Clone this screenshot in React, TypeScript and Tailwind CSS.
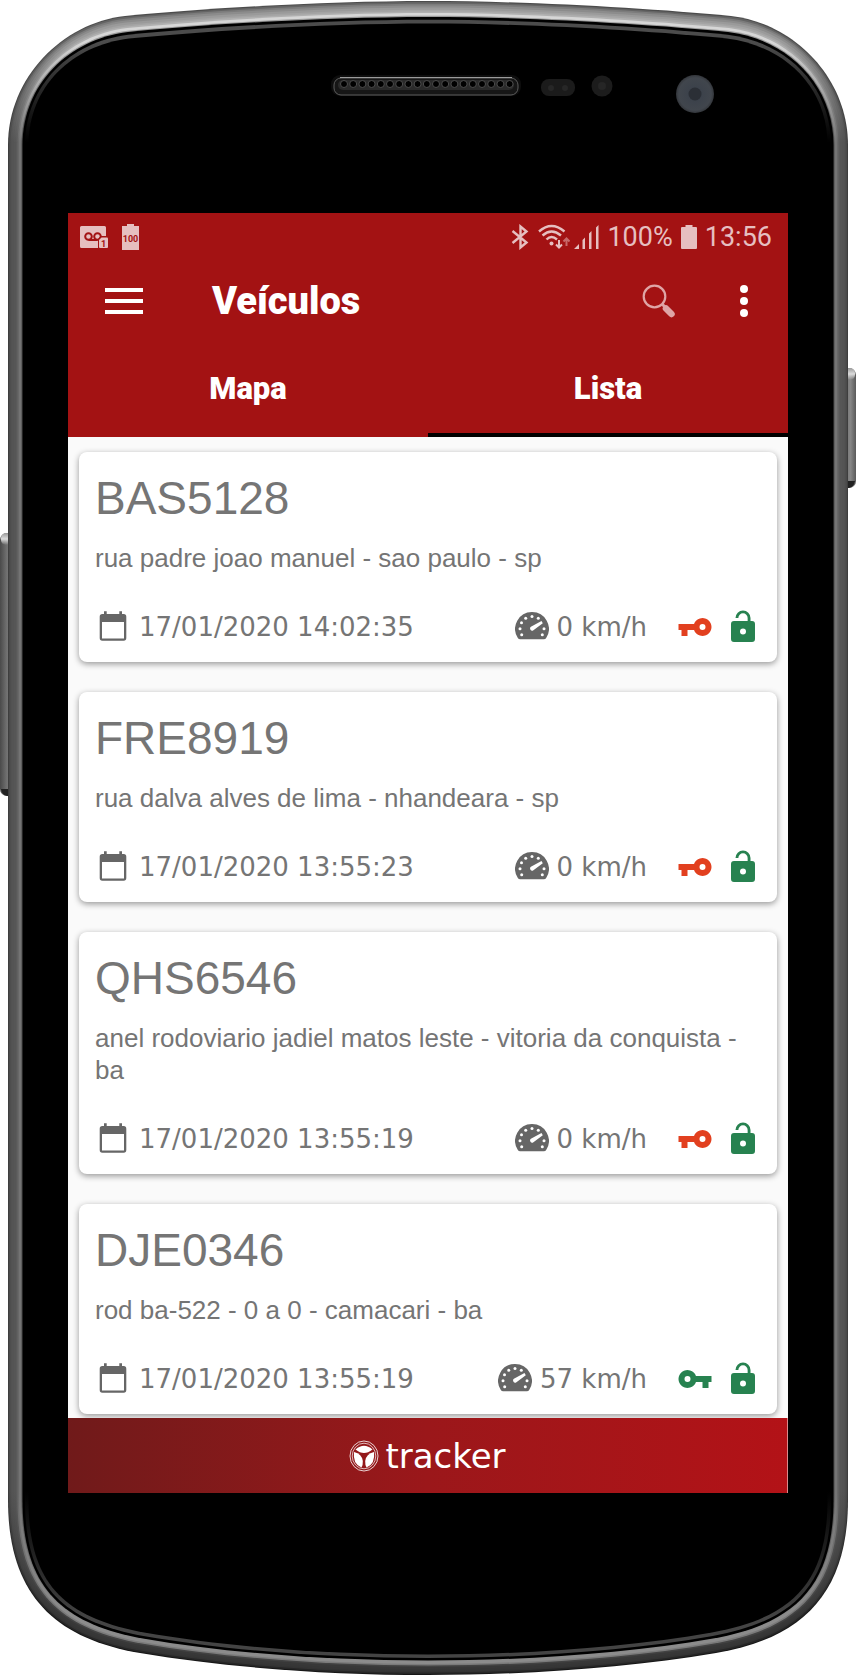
import { useState } from "react";

type Vehicle = {
  plate: string;
  address: string;
  date: string;
  speed: number;
  ignition: boolean;
};

const VEHICLES: Vehicle[] = [
  {
    plate: "BAS5128",
    address: "rua padre joao manuel - sao paulo - sp",
    date: "17/01/2020 14:02:35",
    speed: 0,
    ignition: false,
  },
  {
    plate: "FRE8919",
    address: "rua dalva alves de lima - nhandeara - sp",
    date: "17/01/2020 13:55:23",
    speed: 0,
    ignition: false,
  },
  {
    plate: "QHS6546",
    address: "anel rodoviario jadiel matos leste - vitoria da conquista - ba",
    date: "17/01/2020 13:55:19",
    speed: 0,
    ignition: false,
  },
  {
    plate: "DJE0346",
    address: "rod ba-522 - 0 a 0 - camacari - ba",
    date: "17/01/2020 13:55:19",
    speed: 57,
    ignition: true,
  },
];

const TABS = ["Mapa", "Lista"];

/* ---------- phone body ---------- */

// outline of the case, d = distance in from the outer edge
function outline(d: number) {
  const l = 8 + d;
  const r = 848 - d;
  const t = 1 + d * 1.1;
  const b = 1675 - d;
  return [
    `M428 ${t}`,
    `C330 ${t} 210 ${t + 7} ${125 + d * 0.2} ${t + 15}`,
    `C${62 + d * 0.5} ${t + 22} ${l} ${78 + d * 0.4} ${l} 145`,
    `L${l} 1500`,
    `C${l} ${1590 - d * 0.4} ${50 + d * 0.6} ${b - 37} ${140 + d * 0.2} ${b - 22}`,
    `C230 ${b - 7} 330 ${b} 428 ${b}`,
    `C526 ${b} 626 ${b - 7} ${716 - d * 0.2} ${b - 22}`,
    `C${806 - d * 0.6} ${b - 37} ${r} ${1590 - d * 0.4} ${r} 1500`,
    `L${r} 145`,
    `C${r} ${78 + d * 0.4} ${794 - d * 0.5} ${t + 22} ${731 - d * 0.2} ${t + 15}`,
    `C646 ${t + 7} 526 ${t} 428 ${t}Z`,
  ].join(" ");
}

const BEVEL = [
  { d: 0, top: "#4c4c4c", side: "#3e3e3e", bottom: "#161616" },
  { d: 1, top: "#646464", side: "#4a4a4a", bottom: "#262626" },
  { d: 2.5, top: "#7c7c7c", side: "#525252", bottom: "#333333" },
  { d: 4, top: "#8c8c8c", side: "#545454", bottom: "#363636" },
  { d: 6, top: "#9a9a9a", side: "#565656", bottom: "#383838" },
  { d: 8, top: "#a4a4a4", side: "#5a5a5a", bottom: "#424242" },
  { d: 9.5, top: "#b0b0b0", side: "#686868", bottom: "#7a7a7a" },
  { d: 11, top: "#d6d6d6", side: "#747474", bottom: "#8c8c8c" },
  { d: 13.5, top: "#9a9a9a", side: "#4a4a4a", bottom: "#8a8a8a" },
  { d: 14.5, top: "#000000", side: "#000000", bottom: "#000000" },
  { d: 17, top: "#4c4c4c", side: "#000000", bottom: "#444444" },
  { d: 20.5, top: "#000000", side: "#000000", bottom: "#000000" },
];

const HOLES = Array.from({ length: 19 }, (_, i) => 344 + i * 9.2);

function PhoneBody() {
  return (
    <svg
      className="absolute inset-0 h-full w-full"
      viewBox="0 0 856 1676"
      preserveAspectRatio="none"
      aria-hidden="true"
    >
      <defs>
        {BEVEL.map((b, i) => (
          <linearGradient
            key={i}
            id={`bevel${i}`}
            gradientUnits="userSpaceOnUse"
            x1="0"
            y1="0"
            x2="0"
            y2="1676"
          >
            <stop offset="0" stopColor={b.top} />
            <stop offset="0.025" stopColor={b.top} />
            <stop offset="0.085" stopColor={b.side} />
            <stop offset="0.89" stopColor={b.side} />
            <stop offset="0.965" stopColor={b.bottom} />
          </linearGradient>
        ))}
        <linearGradient id="key" x1="0" y1="0" x2="1" y2="0">
          <stop offset="0" stopColor="#4a4a4a" />
          <stop offset="0.35" stopColor="#6e6e6e" />
          <stop offset="0.7" stopColor="#868686" />
          <stop offset="1" stopColor="#5a5a5a" />
        </linearGradient>
        <linearGradient id="keyCap" x1="0" y1="0" x2="0" y2="1">
          <stop offset="0" stopColor="#9a9a9a" />
          <stop offset="0.5" stopColor="#dcdcdc" />
          <stop offset="1" stopColor="#dcdcdc" stopOpacity="0" />
        </linearGradient>
        <radialGradient id="lens">
          <stop offset="0.35" stopColor="#3c424b" />
          <stop offset="0.85" stopColor="#41464d" />
          <stop offset="1" stopColor="#33363b" />
        </radialGradient>
      </defs>

      <rect x="0" y="533" width="18" height="263" rx="7" fill="url(#key)" />
      <rect x="1" y="533" width="10" height="12" rx="5" fill="url(#keyCap)" />
      <path d="M1 789h10v7H7q-5-1-6-7z" fill="#222" />
      <rect x="838" y="368" width="18" height="120" rx="7" fill="url(#key)" />
      <rect x="845" y="368" width="10" height="12" rx="5" fill="url(#keyCap)" />
      <path d="M845 481h10q-1 6-6 7h-4z" fill="#222" />

      {BEVEL.map((b, i) => (
        <path key={b.d} d={outline(b.d)} fill={`url(#bevel${i})`} />
      ))}

      {/* earpiece */}
      <rect x="331" y="75" width="190" height="21" rx="9" fill="#0d0d0d" />
      <rect x="334" y="78" width="184" height="17" rx="7" fill="#161616" stroke="#5c5c5c" />
      <path d="M340 77.5h172" stroke="#9a9a9a" />
      <rect x="338" y="80" width="176" height="10" rx="5" fill="#2a2a2a" />
      {HOLES.map((x) => (
        <circle key={x} cx={x} cy="84" r="3.5" fill="#000" stroke="#4c4c4c" />
      ))}

      {/* sensors and front camera */}
      <rect x="541" y="79" width="34" height="17" rx="8" fill="#1b1b1b" />
      <circle cx="551" cy="88" r="3" fill="#272727" />
      <circle cx="565" cy="88" r="3" fill="#272727" />
      <circle cx="602" cy="86" r="10.5" fill="#1c1c1c" />
      <circle cx="602" cy="86" r="4" fill="#262626" />
      <circle cx="695" cy="94" r="19" fill="url(#lens)" />
      <circle cx="695" cy="94" r="6.5" fill="#2b2f36" />
    </svg>
  );
}

/* ---------- icons ---------- */

function VoicemailIcon() {
  return (
    <svg width="28" height="24" viewBox="0 0 28 24" aria-hidden="true">
      <path
        d="M1.500 1h23Q26 1 26 2.500V11h-5.500L18 14v9H1.500Q0 23 0 21.500v-19Q0 1 1.500 1z"
        fill="#e6bfc0"
      />
      <g fill="none" stroke="#a31213" strokeWidth="2">
        <circle cx="8.500" cy="11.500" r="3.300" />
        <circle cx="17.500" cy="11.500" r="3.300" />
        <path d="M8.500 15h9" />
      </g>
      <path d="M21.500 12.500H27q1 0 1 1V22q0 1-1 1h-7q-1 0-1-1v-7z" fill="#e6bfc0" />
      <text
        x="23.500"
        y="21.500"
        textAnchor="middle"
        fill="#a31213"
        className="font-['Roboto'] text-[9px] font-bold"
      >
        1
      </text>
    </svg>
  );
}

function BatteryLevelIcon() {
  return (
    <svg width="17" height="26" viewBox="0 0 17 26" aria-hidden="true">
      <path d="M0 2h5V0h7v2h5v24H0z" fill="#e6bfc0" />
      <text
        x="8.500"
        y="18"
        textAnchor="middle"
        fill="#a31213"
        className="font-['Roboto'] text-[9px] font-bold"
      >
        100
      </text>
    </svg>
  );
}

function BluetoothIcon() {
  return (
    <svg
      width="24"
      height="26"
      viewBox="0 0 24 26"
      fill="none"
      stroke="#e6bfc0"
      strokeWidth="2.400"
      aria-hidden="true"
    >
      <path d="M2.500 7l14 11.500-6 5V2.500l6 5L2.500 19" />
    </svg>
  );
}

function WifiIcon() {
  return (
    <svg width="32" height="26" viewBox="0 0 32 26" fill="none" aria-hidden="true">
      <g stroke="#e6bfc0" strokeWidth="2.400">
        <path d="M1 7.500Q13.500-3.500 26.500 7.500" />
        <path d="M4.500 11.500Q13.500 3.500 23 11.500" />
        <path d="M8.500 15.500Q13.500 10.500 19 15.500" />
      </g>
      <circle cx="13.500" cy="19.500" r="2" fill="#e6bfc0" />
      <path d="M21 16v7M18 20.500l3 3 3-3" stroke="#e6bfc0" strokeWidth="2" />
      <path d="M28.500 22v-7M25.500 17.500l3-3 3 3" stroke="#c7696a" strokeWidth="2" />
    </svg>
  );
}

function SignalIcon() {
  return (
    <svg width="25" height="24" viewBox="0 0 25 24" fill="#e6bfc0" aria-hidden="true">
      <path d="M0 24l5-5v5zM8.500 24V15l2.500-2.500V24zM15 24V8.500l2.500-2.500V24zM22 24V2.500L24.500 0v24z" />
    </svg>
  );
}

function BatteryIcon() {
  return (
    <svg width="16" height="24" viewBox="0 0 16 24" fill="#e6bfc0" aria-hidden="true">
      <path d="M1 2h3.500V0h7v2H15q1 0 1 1v20q0 1-1 1H1q-1 0-1-1V3q0-1 1-1z" />
    </svg>
  );
}

function SearchIcon() {
  return (
    <svg width="34" height="34" viewBox="0 0 34 34" fill="none" stroke="#dfa5a6" aria-hidden="true">
      <circle cx="12.500" cy="12.500" r="10.800" strokeWidth="2.200" />
      <path d="M20 20l3.500 3.500" strokeWidth="3" />
      <path d="M24 24.500l5.500 5.500" strokeWidth="6.500" strokeLinecap="round" />
    </svg>
  );
}

function CalendarIcon() {
  return (
    <svg width="32" height="34" viewBox="0 0 32 34" fill="#666" aria-hidden="true">
      <path d="M26.700 4H25V1.300h-2.700V4H9.700V1.300H7V4H5.300a2.700 2.700 0 0 0-2.600 2.700V28a2.700 2.700 0 0 0 2.600 2.700h21.400a2.700 2.700 0 0 0 2.600-2.700V6.700A2.700 2.700 0 0 0 26.700 4zm.300 24.500H5V12h22z" />
    </svg>
  );
}

function SpeedIcon() {
  return (
    <svg width="34" height="30" viewBox="0 0 34 30" aria-hidden="true">
      <path
        d="M17 0a16.800 16.800 0 0 1 14.300 25.700Q30.400 27.300 28.800 27.300H5.200Q3.600 27.300 2.700 25.700A16.800 16.800 0 0 1 17 0z"
        fill="#666"
      />
      <g fill="#fff">
        <circle cx="17" cy="4.600" r="1.500" />
        <circle cx="10.700" cy="6.200" r="1.500" />
        <circle cx="23.300" cy="6.200" r="1.500" />
        <circle cx="6.500" cy="10.700" r="1.500" />
        <circle cx="5" cy="16.700" r="1.500" />
        <circle cx="29" cy="16.700" r="1.500" />
        <circle cx="6.700" cy="22.700" r="1.500" />
        <circle cx="27.300" cy="22.700" r="1.500" />
        <path d="M26.500 9l1.300 2.300-9.400 6.900a2 2 0 0 1-2.500-3.400z" />
      </g>
    </svg>
  );
}

function KeyIcon({ on }: { on: boolean }) {
  return (
    <svg
      width="36"
      height="36"
      viewBox="0 0 24 24"
      role="img"
      aria-label={on ? "ignição ligada" : "ignição desligada"}
      className={on ? "text-[#278250]" : "-scale-x-100 text-[#e2401f]"}
      fill="currentColor"
    >
      <path d="M12.650 10A6 6 0 1 0 12.650 14H17v4h4v-4h2v-4zM7 14a2 2 0 1 1 0-4 2 2 0 0 1 0 4z" />
    </svg>
  );
}

function LockOpenIcon() {
  return (
    <svg
      width="36"
      height="36"
      viewBox="0 0 24 24"
      fill="#278250"
      role="img"
      aria-label="desbloqueado"
    >
      <path d="M18 8h-1V6A5 5 0 0 0 7 6h1.900a3.100 3.100 0 0 1 6.200 0v2H6a2 2 0 0 0-2 2v10a2 2 0 0 0 2 2h12a2 2 0 0 0 2-2V10a2 2 0 0 0-2-2zm-6 9a2 2 0 1 1 0-4 2 2 0 0 1 0 4z" />
    </svg>
  );
}

function TrackerMark() {
  return (
    <svg width="30" height="32" viewBox="0 0 30 32" aria-hidden="true">
      <g fill="none" stroke="#fff">
        <ellipse cx="15" cy="16" rx="14" ry="15" strokeWidth="1" strokeOpacity="0.800" />
        <ellipse cx="15" cy="16" rx="11.800" ry="12.800" strokeWidth="1" strokeOpacity="0.700" />
      </g>
      <g fill="#fff">
        <path d="M6.500 9.500Q15 2 23.500 9.500 19 13 15 13T6.500 9.500z" />
        <path d="M5 12q8 2 8.800 9 .2 4-1.300 6.500Q3.500 24 5 12z" />
        <path d="M25 12q-8 2-8.800 9-.2 4 1.300 6.500Q26.500 24 25 12z" />
      </g>
    </svg>
  );
}

/* ---------- screen ---------- */

function StatusBar() {
  return (
    <div className="flex h-12 items-center justify-between pr-4 pl-3 font-['Roboto',sans-serif] text-[27px] font-normal text-[#e6bfc0]">
      <div className="flex items-center gap-3.5">
        <VoicemailIcon />
        <BatteryLevelIcon />
      </div>
      <div className="flex items-center gap-2">
        <div className="flex items-center gap-1">
          <BluetoothIcon />
          <WifiIcon />
          <SignalIcon />
        </div>
        <span>100%</span>
        <BatteryIcon />
        <span>13:56</span>
      </div>
    </div>
  );
}

function VehicleCard({ v }: { v: Vehicle }) {
  return (
    <li className="rounded-lg bg-white px-4 pt-4 pb-[17px] text-[#757575] shadow-[0_2px_6px_rgba(0,0,0,0.4)]">
      <h2 className="font-['Liberation_Sans',sans-serif] text-[46px] leading-[60px]">{v.plate}</h2>
      <p className="mt-3.5 font-['Liberation_Sans',sans-serif] text-[26px] leading-8">{v.address}</p>
      <div className="mt-[35px] flex h-9 items-center font-['DejaVu_Sans',sans-serif] text-[26px]">
        <span className="flex w-9 justify-center">
          <CalendarIcon />
        </span>
        <span className="ml-2">{v.date}</span>
        <span className="mr-2 ml-auto">
          <SpeedIcon />
        </span>
        <span className="mr-[30px]">{v.speed} km/h</span>
        <KeyIcon on={v.ignition} />
        <span className="ml-3">
          <LockOpenIcon />
        </span>
      </div>
    </li>
  );
}

export default function App() {
  const [tab, setTab] = useState("Lista");

  return (
    <div className="relative bg-white px-[68px] pt-[213px] pb-[183px]">
      <PhoneBody />
      <div className="relative bg-[#fafafa]">
        <header className="bg-[#a31213] font-['Roboto',sans-serif] font-black text-white">
          <StatusBar />
          <div className="flex h-20 items-center pr-10 pl-[37px]">
            <button type="button" aria-label="Menu" className="flex flex-col gap-[7px]">
              <span className="h-1 w-[38px] bg-white" />
              <span className="h-1 w-[38px] bg-white" />
              <span className="h-1 w-[38px] bg-white" />
            </button>
            <h1 className="ml-[69px] text-[38px]">Veículos</h1>
            <button type="button" aria-label="Buscar" className="ml-auto">
              <SearchIcon />
            </button>
            <button type="button" aria-label="Mais opções" className="ml-16 flex flex-col gap-1">
              <span className="size-2 rounded-full bg-white" />
              <span className="size-2 rounded-full bg-white" />
              <span className="size-2 rounded-full bg-white" />
            </button>
          </div>
          <div role="tablist" className="grid h-24 grid-cols-2">
            {TABS.map((t) => (
              <button
                key={t}
                type="button"
                role="tab"
                aria-selected={tab === t}
                onClick={() => setTab(t)}
                className={
                  tab === t
                    ? "border-b-4 border-black pt-1 text-[31px]"
                    : "border-b-4 border-transparent pt-1 text-[31px]"
                }
              >
                {t}
              </button>
            ))}
          </div>
        </header>

        <ul className="flex flex-col gap-[30px] px-[11px] pt-[15px] pb-1">
          {VEHICLES.map((v) => (
            <VehicleCard key={v.plate} v={v} />
          ))}
        </ul>

        <footer className="relative flex h-[75px] items-center justify-center gap-1.5 border-r border-[#d98a8c] bg-linear-to-r from-[#701a1a] via-[#9b171a] to-[#b31217]">
          <TrackerMark />
          <span className="font-['DejaVu_Sans',sans-serif] text-[34px] leading-none text-white">
            tracker
          </span>
        </footer>
      </div>
    </div>
  );
}
